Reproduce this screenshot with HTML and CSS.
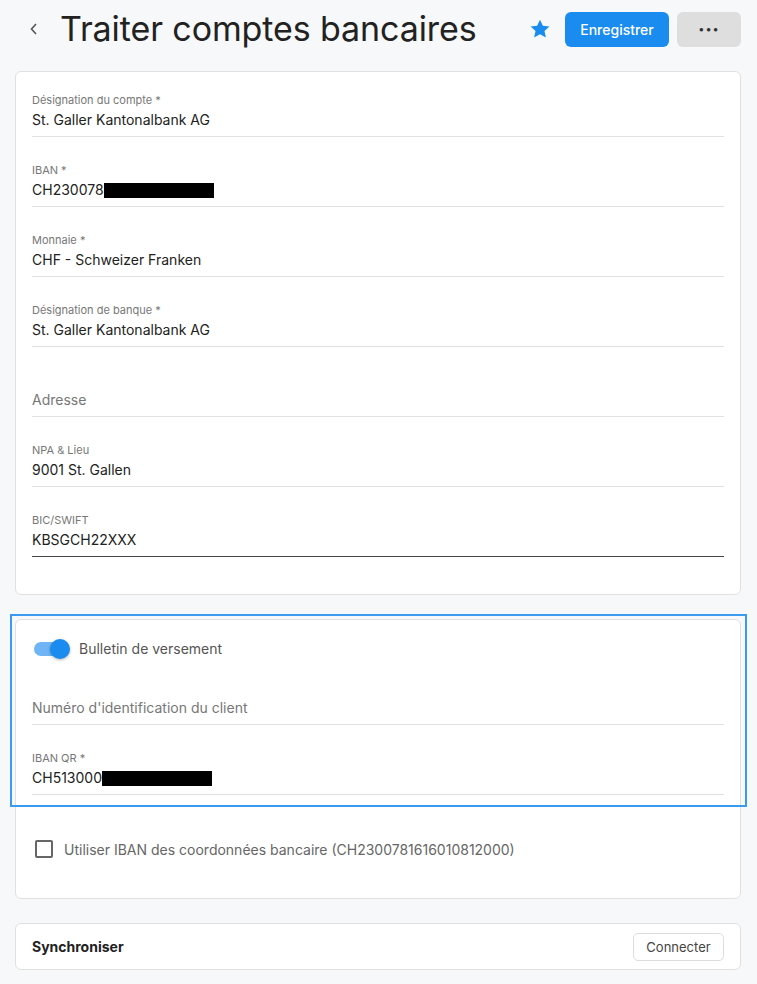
FILE: index.html
```html
<!DOCTYPE html>
<html lang="fr">
<head>
<meta charset="utf-8">
<link rel="stylesheet" href="styles.css">
</head>
<body>
<div class="page">
  <header class="header">
    <button class="back" aria-label="Retour">
      <svg width="10" height="14" viewBox="0 0 10 14"><path d="M7 2 L2.5 7 L7 12" fill="none" stroke="#555" stroke-width="1.6"/></svg>
    </button>
    <h1 class="title">Traiter comptes bancaires</h1>
    <div class="actions">
      <svg class="star" width="22" height="22" viewBox="0 0 24 24"><path d="M12 1.8l3.1 6.6 7.2.8-5.4 4.9 1.5 7.1L12 17.6l-6.4 3.6 1.5-7.1L1.7 9.2l7.2-.8z" fill="#1a8cf0"/></svg>
      <button class="btn-primary">Enregistrer</button>
      <button class="btn-more">•••</button>
    </div>
  </header>

  <section class="card">
    <div class="field"><div class="label">Désignation du compte *</div><div class="value">St. Galler Kantonalbank AG</div></div>
    <div class="field"><div class="label">IBAN *</div><div class="value">CH230078<span class="redact"></span></div></div>
    <div class="field"><div class="label">Monnaie *</div><div class="value">CHF - Schweizer Franken</div></div>
    <div class="field"><div class="label">Désignation de banque *</div><div class="value">St. Galler Kantonalbank AG</div></div>
    <div class="field empty"><div class="value placeholder">Adresse</div></div>
    <div class="field"><div class="label">NPA &amp; Lieu</div><div class="value">9001 St. Gallen</div></div>
    <div class="field active"><div class="label">BIC/SWIFT</div><div class="value">KBSGCH22XXX</div></div>
  </section>

  <section class="card card2">
    <div class="highlight"></div>
    <div class="toggle-row">
      <span class="toggle"><span class="track"></span><span class="knob"></span></span>
      <span class="toggle-label">Bulletin de versement</span>
    </div>
    <div class="field empty short"><div class="value placeholder">Numéro d'identification du client</div></div>
    <div class="field"><div class="label">IBAN QR *</div><div class="value">CH513000<span class="redact"></span></div></div>
    <label class="check-row"><span class="checkbox"></span><span class="check-label">Utiliser IBAN des coordonnées bancaire (CH2300781616010812000)</span></label>
  </section>

  <section class="card sync">
    <span class="sync-title">Synchroniser</span>
    <button class="btn-outline">Connecter</button>
  </section>
</div>
</body>
</html>
```

FILE: styles.css
```css
* { box-sizing: border-box; }
html, body { margin: 0; padding: 0; }
body {
  background: #f7f8f9;
  font-family: Inter, "Noto Sans", sans-serif;
  color: #222;
  width: 757px;
  height: 984px;
  overflow: hidden;
}
.page { padding: 0 16px 0 15px; }
.header {
  display: flex;
  align-items: center;
  height: 58px;
}
.back {
  border: 0; background: none; padding: 0;
  width: 16px; height: 20px;
  margin-left: 11px;
  margin-right: 18px;
  display: flex; align-items: center; justify-content: center;
}
.title {
  margin: 0;
  font-weight: 400;
  font-size: 34px;
  color: #222;
  letter-spacing: -0.1px;
  flex: 1;
  line-height: 40px;
}
.actions { display: flex; align-items: center; }
.star { margin-right: 14px; }
.btn-primary {
  height: 35px; width: 104px;
  border: 0; border-radius: 6px;
  background: #1a8cf0; color: #fff;
  font-family: inherit; font-size: 14px; font-weight: 500;
  margin-right: 8px;
}
.btn-more {
  height: 35px; width: 64px;
  border: 0; border-radius: 6px;
  background: #dedede; color: #333;
  font-size: 11px; letter-spacing: 1px;
  font-family: inherit;
}
.card {
  background: #fff;
  border: 1px solid #e0e0e0;
  border-radius: 6px;
  margin-top: 13px;
  padding: 16px 16px 37px 16px;
  position: relative;
}
.field {
  height: 70px;
  border-bottom: 1px solid #e2e2e2;
  display: flex; flex-direction: column; justify-content: flex-end;
  padding-bottom: 7px;
}
.card > .field:first-child { height: 49px; }
.field.active { border-bottom-color: #444; }
.label { font-size: 11px; color: #777; line-height: 14px; margin-bottom: 4px; }
.value { font-size: 14px; color: #222; line-height: 18px; display: flex; align-items: center; }
.value.placeholder { color: #777; }
.redact { display: inline-block; width: 110px; height: 15px; background: #000; }
.card2 { margin-top: 24px; padding-top: 16px; padding-bottom: 39px; }
.highlight {
  position: absolute;
  left: -6px; top: -6px; right: -7px;
  height: 193px;
  border: 2px solid #3a9af0;
  pointer-events: none;
}
.toggle-row { display: flex; align-items: center; height: 24px; }
.toggle { position: relative; width: 40px; height: 20px; margin-left: 1px; margin-right: 6px; }
.track { position: absolute; left: 1px; top: 4px; width: 34px; height: 14px; border-radius: 7px; background: #6fb4f4; }
.knob { position: absolute; left: 17px; top: 1px; width: 20px; height: 20px; border-radius: 50%; background: #1a8cf0; box-shadow: 0 1px 3px rgba(0,0,0,0.3); }
.toggle-label { font-size: 14px; color: #555; }
.field.short { height: 65px; }
.check-row { display: flex; align-items: center; margin-top: 44px; height: 20px; }
.checkbox { width: 18px; height: 18px; border: 2px solid #666; border-radius: 2px; margin-left: 3px; margin-right: 11px; }
.check-label { font-size: 14px; color: #666; }
.sync {
  margin-top: 24px;
  padding: 0 16px;
  height: 47px;
  display: flex; align-items: center; justify-content: space-between;
}
.sync-title { font-size: 14px; font-weight: 700; color: #222; }
.btn-outline {
  height: 28px; width: 91px;
  border: 1px solid #ddd; border-radius: 5px;
  background: #fff; color: #444;
  font-family: inherit; font-size: 13px;
}
```
